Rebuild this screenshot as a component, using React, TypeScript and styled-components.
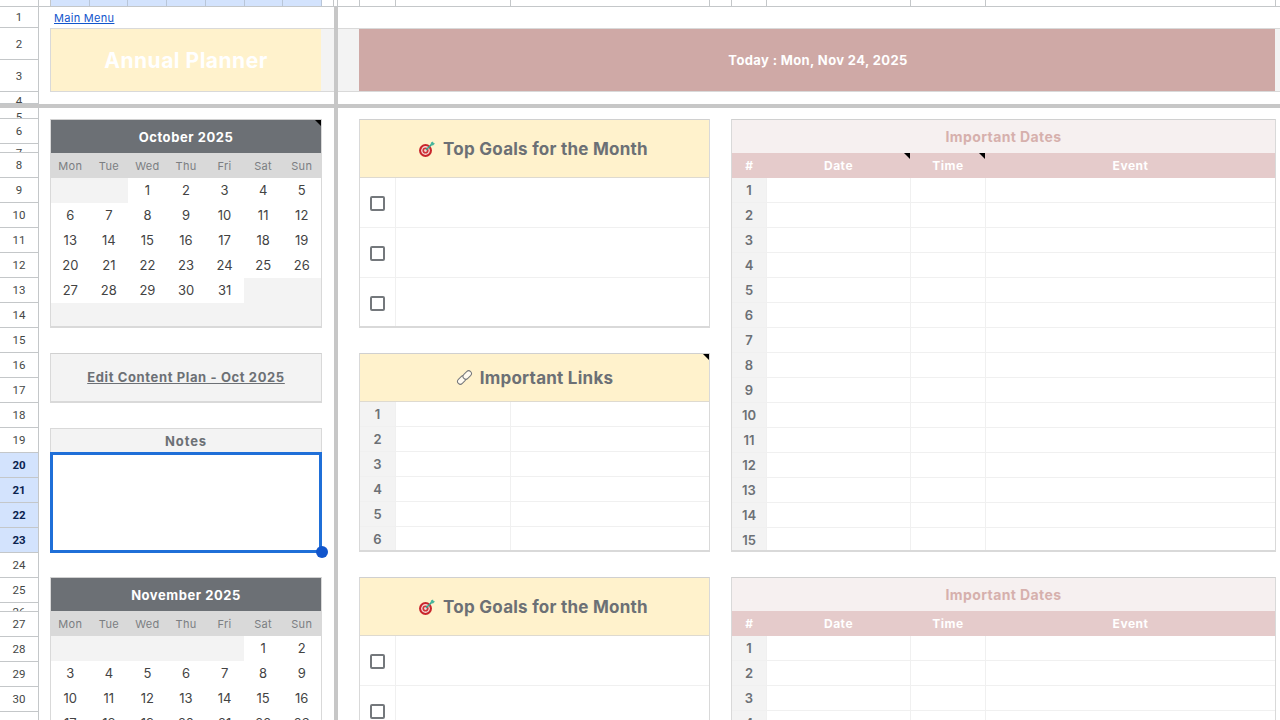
import React from "react";
import styled, { createGlobalStyle, css } from "styled-components";

const FONT = `"Inter", "Liberation Sans", sans-serif`;

const Global = createGlobalStyle`
  html, body { margin: 0; padding: 0; background: #fff; }
  body { font-family: ${FONT}; overflow: hidden; }
`;

const Sheet = styled.div`
  width: 1280px;
  height: 720px;
  overflow: hidden;
  display: flex;
  flex-direction: column;
`;

const ColumnStrip = styled.div`
  height: 6px;
  display: flex;
  border-bottom: 1px solid #c4c7c9;
  flex: none;
`;
const ColHead = styled.div<{ $w: number; $sel?: boolean }>`
  width: ${(p) => p.$w}px;
  flex: none;
  box-sizing: border-box;
  border-right: 1px solid ${(p) => (p.$sel ? "#b9c6d8" : "#c4c7c9")};
  background: ${(p) => (p.$sel ? "#d3e3fd" : "#fff")};
`;

const FreezeV = styled.div`
  width: 4px;
  flex: none;
  align-self: stretch;
  background: #c7c7c7;
`;
const FreezeH = styled.div`
  height: 4px;
  flex: none;
  background: #c7c7c7;
`;

const TopPane = styled.div`
  height: 97px;
  display: flex;
  flex: none;
  overflow: hidden;
`;
const BottomPane = styled.div`
  flex: 1;
  min-height: 0;
  display: flex;
  overflow: hidden;
`;

const RowHeads = styled.div`
  width: 39px;
  flex: none;
  box-sizing: border-box;
  border-right: 1px solid #c4c7c9;
  display: flex;
  flex-direction: column;
`;
const RowHead = styled.div<{ $h: number; $sel?: boolean }>`
  height: ${(p) => p.$h}px;
  flex: none;
  box-sizing: border-box;
  overflow: hidden;
  border-bottom: 1px solid #c4c7c9;
  display: flex;
  justify-content: center;
  font: ${(p) => (p.$sel ? 700 : 400)} 11.5px/16px "Roboto", "Liberation Sans", sans-serif;
  color: ${(p) => (p.$sel ? "#0b2350" : "#444746")};
  background: ${(p) => (p.$sel ? "#d3e3fd" : "#fff")};
  ${(p) =>
    p.$h >= 20
      ? css`
          align-items: center;
        `
      : css`
          align-items: flex-start;
          padding-top: 1px;
        `}
`;

const TopLeft = styled.div`
  width: 295px;
  flex: none;
  display: flex;
  flex-direction: column;
`;
const MenuRow = styled.div`
  height: 21px;
  flex: none;
  display: flex;
  align-items: center;
  padding-left: 15px;
  box-sizing: border-box;
`;
const MenuLink = styled.a`
  font: 400 11px/14px ${FONT};
  letter-spacing: 0.3px;
  color: #1155cc;
  text-decoration: underline;
`;
const BannerRow = styled.div<{ $inset?: boolean }>`
  height: 64px;
  flex: none;
  display: flex;
  padding-left: ${(p) => (p.$inset ? 11 : 0)}px;
`;
const BannerBase = styled.div`
  box-sizing: border-box;
  border-top: 1px solid #d9d9d9;
  border-bottom: 1px solid #d9d9d9;
  display: flex;
  align-items: center;
  justify-content: center;
`;
const YellowBanner = styled(BannerBase)`
  width: 271px;
  flex: none;
  background: #fff2cc;
  border-left: 1px solid #d9d9d9;
  color: #fff;
  font-size: 21px;
  font-weight: 700;
  letter-spacing: 0.5px;
`;
const GreyFill = styled(BannerBase)<{ $w: number }>`
  flex: none;
  width: ${(p) => p.$w}px;
  background: #f3f3f3;
`;
const RoseBanner = styled(BannerBase)`
  width: 916px;
  flex: none;
  padding-left: 2px;
  background: #cfa9a6;
  color: #fff;
  font-size: 13px;
  font-weight: 700;
  letter-spacing: 0.37px;
`;
const TopRight = styled.div`
  flex: 1;
  padding-top: 21px;
  display: flex;
  flex-direction: column;
`;

const LeftPane = styled.div`
  width: 295px;
  flex: none;
  box-sizing: border-box;
  padding: 11px 12px 0 11px;
  display: flex;
  flex-direction: column;
  gap: 25px;
`;
const RightPane = styled.div`
  flex: 1;
  box-sizing: border-box;
  padding: 11px 0 0 21px;
  display: flex;
  gap: 21px;
`;
const PanelColumn = styled.div<{ $w: number }>`
  width: ${(p) => p.$w}px;
  flex: none;
  display: flex;
  flex-direction: column;
  gap: 25px;
`;

const Note = styled.i`
  position: absolute;
  top: 0;
  right: 0;
  width: 0;
  height: 0;
  border-top: 6px solid #000;
  border-left: 6px solid transparent;
`;

const Card = styled.div<{ $h: number }>`
  flex: none;
  height: ${(p) => p.$h}px;
  overflow: hidden;
  box-sizing: border-box;
  border: 1px solid #d9d9d9;
  border-top-color: #d0d0d0;
  border-bottom-width: 2px;
`;

const CalTitle = styled.div`
  position: relative;
  height: 33px;
  background: #6c7075;
  color: #fff;
  font-size: 13px;
  font-weight: 700;
  letter-spacing: 0.55px;
  display: flex;
  align-items: center;
  justify-content: center;
`;
const WeekRow = styled.div`
  height: 25px;
  display: grid;
  grid-template-columns: repeat(7, 1fr);
  background: #d9d9d9;
`;
const WeekDay = styled.div`
  display: flex;
  align-items: center;
  justify-content: center;
  font-size: 11px;
  letter-spacing: 0.3px;
  color: #7b7e82;
`;
const DayGrid = styled.div`
  display: grid;
  grid-template-columns: repeat(7, 1fr);
  grid-auto-rows: 25px;
`;
const DayCell = styled.div<{ $empty?: boolean }>`
  display: flex;
  align-items: center;
  justify-content: center;
  padding-bottom: 1px;
  box-sizing: border-box;
  font-size: 13px;
  color: #434343;
  background: ${(p) => (p.$empty ? "#f3f3f3" : "#fff")};
`;

const EditBox = styled(Card)`
  background: #f3f3f3;
  display: flex;
  align-items: center;
  justify-content: center;
  padding-bottom: 1px;
  color: #6c7075;
  font-size: 13px;
  font-weight: 700;
  letter-spacing: 0.62px;
  text-decoration: underline;
`;

const NotesBlock = styled.div`
  flex: none;
  height: 124px;
  display: flex;
  flex-direction: column;
`;
const NotesHead = styled.div`
  height: 24px;
  flex: none;
  box-sizing: border-box;
  background: #f3f3f3;
  border: 1px solid #d9d9d9;
  border-bottom: 0;
  display: flex;
  align-items: center;
  justify-content: center;
  color: #6c7075;
  font-size: 13px;
  font-weight: 700;
  letter-spacing: 0.9px;
`;
const NotesBody = styled.div`
  position: relative;
  height: 101px;
  flex: none;
  box-sizing: border-box;
  border: 3px solid #1f6fd8;
  background: #fff;
`;
const Handle = styled.i`
  position: absolute;
  right: -9px;
  bottom: -8px;
  width: 12px;
  height: 12px;
  border-radius: 50%;
  background: #1155cc;
`;

const PanelHead = styled.div<{ $h: number; $pr?: number }>`
  position: relative;
  height: ${(p) => p.$h}px;
  box-sizing: border-box;
  padding-right: ${(p) => p.$pr ?? 0}px;
  background: #fff2cc;
  border-bottom: 1px solid #dedad0;
  display: flex;
  align-items: center;
  justify-content: center;
  gap: 7px;
  color: #6c7075;
  font-size: 17px;
  font-weight: 700;
  letter-spacing: 0.25px;
`;
const BoxRow = styled.div<{ $h: number; $cols: string }>`
  height: ${(p) => p.$h}px;
  box-sizing: border-box;
  display: grid;
  grid-template-columns: ${(p) => p.$cols};
  border-bottom: 1px solid #f0f0f0;
`;
const NumCell = styled.div`
  background: #f3f3f3;
  display: flex;
  align-items: center;
  justify-content: center;
  color: #6c7075;
  font-size: 13px;
  font-weight: 600;
`;
const BlankCell = styled.div`
  border-left: 1px solid #f0f0f0;
`;
const CheckCell = styled.div`
  display: flex;
  align-items: center;
  justify-content: center;
  padding-top: 2px;
  box-sizing: border-box;
`;
const CheckBox = styled.span`
  width: 15px;
  height: 15px;
  box-sizing: border-box;
  border: 2px solid #74787c;
  border-radius: 2px;
`;

const DatesTitle = styled.div`
  height: 33px;
  background: #f6f0f0;
  display: flex;
  align-items: center;
  justify-content: center;
  color: #d6b0ad;
  font-size: 14px;
  font-weight: 700;
  letter-spacing: 0.4px;
`;
const DATE_COLS = "34px 144px 75px 1fr";
const DatesHead = styled.div`
  height: 25px;
  display: grid;
  grid-template-columns: ${DATE_COLS};
  background: #e5cbcb;
`;
const DatesHeadCell = styled.div`
  position: relative;
  display: flex;
  align-items: center;
  justify-content: center;
  padding-left: 1px;
  color: #fff;
  font-size: 12px;
  font-weight: 700;
  letter-spacing: 0.5px;
`;

const Dart = () => (
  <svg width="18" height="18" viewBox="0 0 18 18" aria-hidden="true">
    <circle cx="7.5" cy="10.5" r="6.5" fill="#c9252c" />
    <circle cx="7.5" cy="10.5" r="4.4" fill="#f4d9d6" />
    <circle cx="7.5" cy="10.5" r="3.1" fill="#d1353a" />
    <circle cx="7.5" cy="10.5" r="1.4" fill="#f4d9d6" />
    <path d="M8 10 L14 4" stroke="#3aa58e" strokeWidth="1.6" />
    <path d="M13 2.5 L15 1.5 L15.5 3 L17 3.5 L15 5.5 L12.5 5Z" fill="#46b69c" />
  </svg>
);

const LinkIcon = () => (
  <svg width="17" height="17" viewBox="0 0 17 17" fill="#fffaf0" stroke="#77797c" strokeWidth="1" aria-hidden="true">
    <rect x="1" y="8.2" width="9.5" height="5.6" rx="2.8" transform="rotate(-45 5.75 11)" />
    <rect x="6.5" y="3.2" width="9.5" height="5.6" rx="2.8" transform="rotate(-45 11.25 6)" />
  </svg>
);

const colHeads: [number, boolean?][] = [
  [39], [12], [39, true], [38, true], [39, true], [39, true], [39, true], [38, true], [39, true],
  [12], [4], [22], [36], [115], [199], [22], [35], [144], [75], [290],
];

const topRows: [string, number][] = [["1", 21], ["2", 32], ["3", 32], ["4", 12]];
const bottomRows: { n: number; h: number }[] = [
  { n: 5, h: 11 },
  { n: 6, h: 25 },
  { n: 7, h: 9 },
  ...Array.from({ length: 18 }, (_, i) => ({ n: i + 8, h: 25 })),
  { n: 26, h: 9 },
  ...Array.from({ length: 5 }, (_, i) => ({ n: i + 27, h: 25 })),
];

const WEEK = ["Mon", "Tue", "Wed", "Thu", "Fri", "Sat", "Sun"];

function Calendar({ title, lead, days, note }: { title: string; lead: number; days: number; note?: boolean }) {
  const cells: (number | null)[] = [];
  for (let i = 0; i < lead; i++) cells.push(null);
  for (let d = 1; d <= days; d++) cells.push(d);
  while (cells.length < 42) cells.push(null);
  return (
    <Card $h={209}>
      <CalTitle>
        {title}
        {note && <Note />}
      </CalTitle>
      <WeekRow>
        {WEEK.map((w) => (
          <WeekDay key={w}>{w}</WeekDay>
        ))}
      </WeekRow>
      <DayGrid>
        {cells.map((c, i) => (
          <DayCell key={i} $empty={c === null}>
            {c}
          </DayCell>
        ))}
      </DayGrid>
    </Card>
  );
}

function GoalsPanel() {
  return (
    <Card $h={209}>
      <PanelHead $h={58} $pr={3}>
        <Dart />
        Top Goals for the Month
      </PanelHead>
      {[0, 1, 2].map((i) => (
        <BoxRow key={i} $h={50} $cols="35px 1fr">
          <CheckCell>
            <CheckBox />
          </CheckCell>
          <BlankCell />
        </BoxRow>
      ))}
    </Card>
  );
}

function DatesPanel({ notes }: { notes?: boolean }) {
  return (
    <Card $h={433}>
      <DatesTitle>Important Dates</DatesTitle>
      <DatesHead>
        <DatesHeadCell>#</DatesHeadCell>
        <DatesHeadCell>
          Date
          {notes && <Note />}
        </DatesHeadCell>
        <DatesHeadCell>
          Time
          {notes && <Note />}
        </DatesHeadCell>
        <DatesHeadCell>Event</DatesHeadCell>
      </DatesHead>
      {Array.from({ length: 15 }, (_, i) => (
        <BoxRow key={i} $h={25} $cols={DATE_COLS}>
          <NumCell>{i + 1}</NumCell>
          <BlankCell />
          <BlankCell />
          <BlankCell />
        </BoxRow>
      ))}
    </Card>
  );
}

export default function App() {
  return (
    <Sheet>
      <Global />
      <ColumnStrip>
        {colHeads.map(([w, sel], i) => (
          <ColHead key={i} $w={w} $sel={sel} />
        ))}
      </ColumnStrip>
      <TopPane>
        <RowHeads>
          {topRows.map(([n, h]) => (
            <RowHead key={n} $h={h}>
              {n}
            </RowHead>
          ))}
        </RowHeads>
        <TopLeft>
          <MenuRow>
            <MenuLink>Main Menu</MenuLink>
          </MenuRow>
          <BannerRow $inset>
            <YellowBanner>Annual Planner</YellowBanner>
            <GreyFill $w={13} />
          </BannerRow>
        </TopLeft>
        <FreezeV />
        <TopRight>
          <BannerRow>
            <GreyFill $w={21} />
            <RoseBanner>Today : Mon, Nov 24, 2025</RoseBanner>
            <GreyFill $w={5} />
          </BannerRow>
        </TopRight>
      </TopPane>
      <FreezeH />
      <BottomPane>
        <RowHeads>
          {bottomRows.map(({ n, h }) => (
            <RowHead key={n} $h={h} $sel={n >= 20 && n <= 23}>
              {n}
            </RowHead>
          ))}
        </RowHeads>
        <LeftPane>
          <Calendar title="October 2025" lead={2} days={31} note />
          <EditBox $h={50}>Edit Content Plan - Oct 2025</EditBox>
          <NotesBlock>
            <NotesHead>Notes</NotesHead>
            <NotesBody>
              <Handle />
            </NotesBody>
          </NotesBlock>
          <Calendar title="November 2025" lead={5} days={30} />
        </LeftPane>
        <FreezeV />
        <RightPane>
          <PanelColumn $w={351}>
            <GoalsPanel />
            <Card $h={199}>
              <PanelHead $h={48}>
                <LinkIcon />
                Important Links
                <Note />
              </PanelHead>
              {[1, 2, 3, 4, 5, 6].map((n) => (
                <BoxRow key={n} $h={25} $cols="35px 115px 1fr">
                  <NumCell>{n}</NumCell>
                  <BlankCell />
                  <BlankCell />
                </BoxRow>
              ))}
            </Card>
            <GoalsPanel />
          </PanelColumn>
          <PanelColumn $w={545}>
            <DatesPanel notes />
            <DatesPanel />
          </PanelColumn>
        </RightPane>
      </BottomPane>
    </Sheet>
  );
}
